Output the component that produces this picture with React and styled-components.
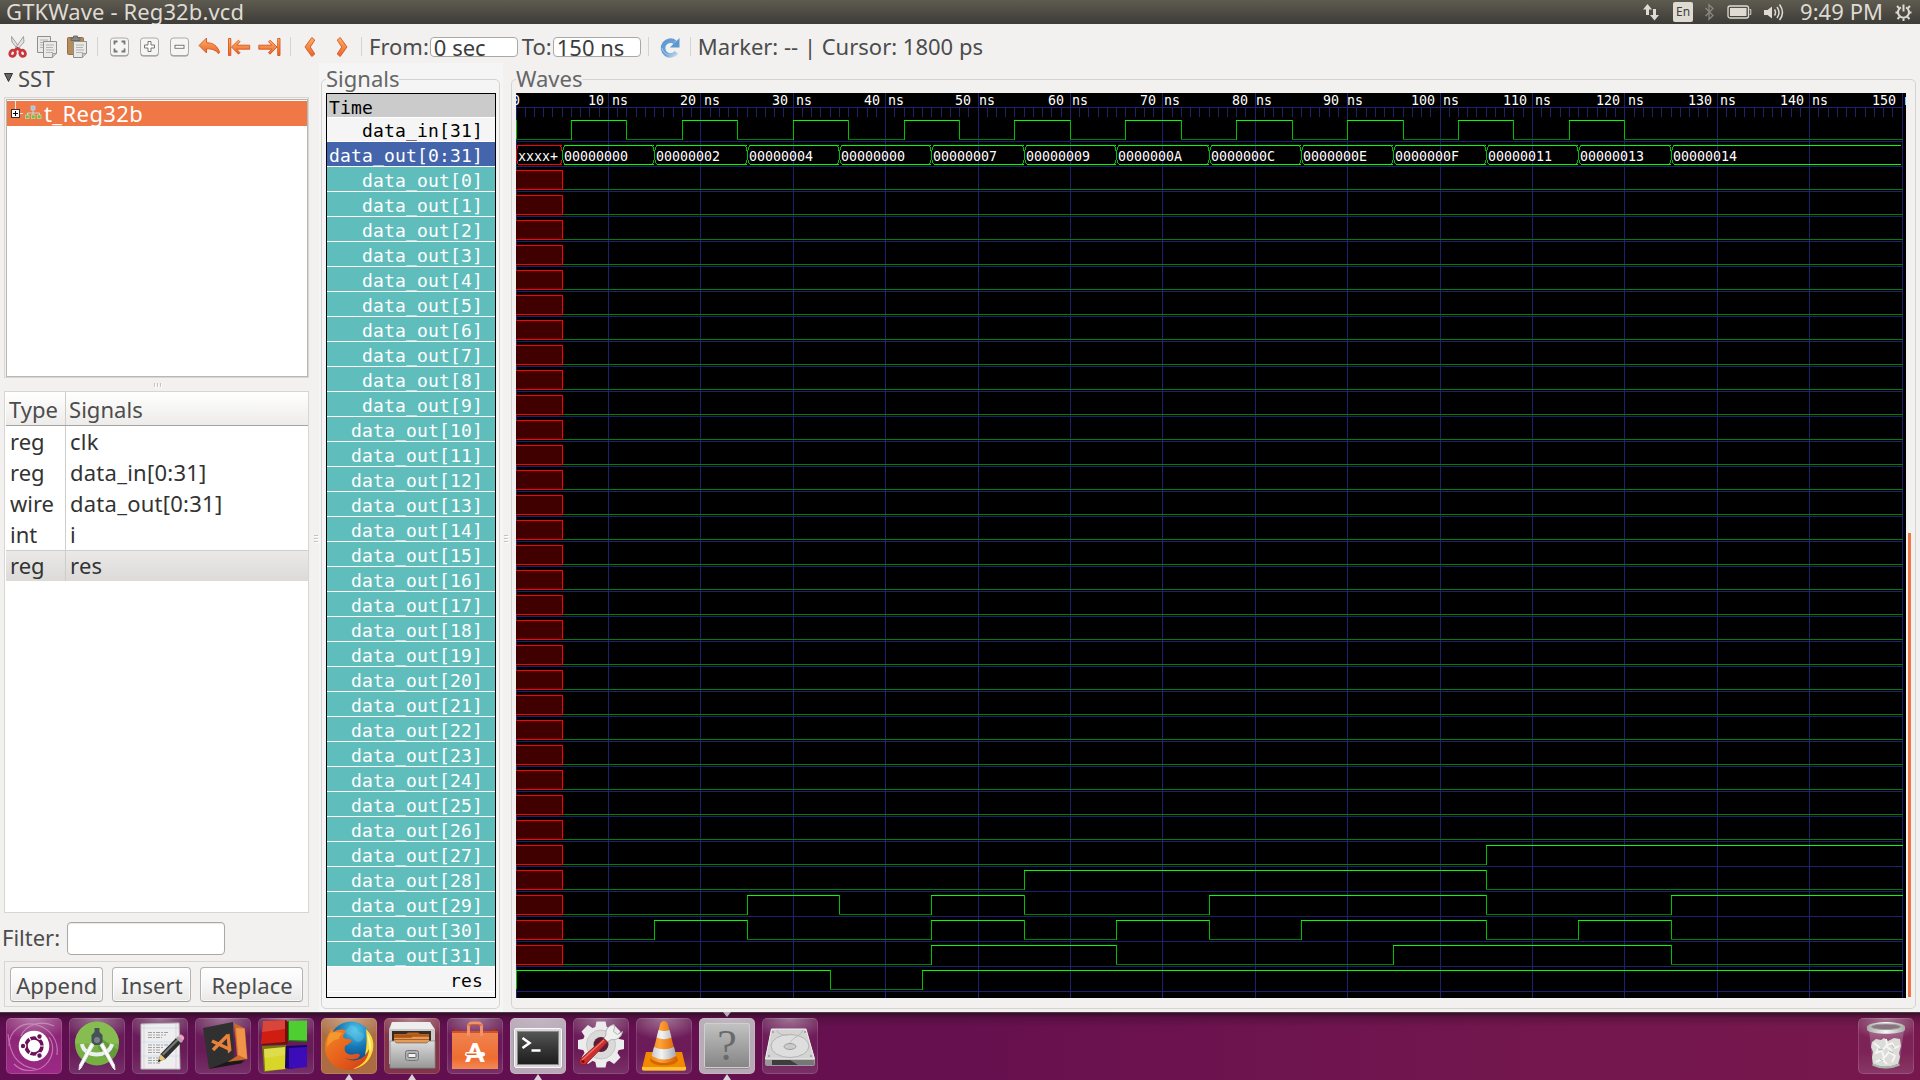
import React from "react";
import styled, { createGlobalStyle, css } from "styled-components";

const UI = '"Noto Sans", "Open Sans", sans-serif';
const MONO = '"DejaVu Sans Mono", "Liberation Mono", monospace';

const Global = createGlobalStyle`
  *, *::before, *::after { box-sizing: border-box; }
  html, body { margin: 0; padding: 0; }
  body { background: #f2f1f0; overflow: hidden; }
  svg { display: block; flex: none; }
`;

const Desktop = styled.div`
  width: 1920px;
  height: 1080px;
  display: grid;
  grid-template-rows: 24px 988px 68px;
  font-family: ${UI};
  font-size: 22px;
  line-height: 30px;
  color: #4c4c4c;
  white-space: nowrap;
`;

const Label = styled.span`
  letter-spacing: ${(p) => p.$track || 0}px;
  flex: none;
`;

/* ---------- top panel ---------- */

const TopPanel = styled.header`
  display: flex;
  justify-content: space-between;
  padding: 0 7px 0 6px;
  height: 24px;
  overflow: hidden;
  background: linear-gradient(#5d5a4f, #59564d 15%, #3d3c37);
  color: #dfdbd2;
`;

const PanelText = styled(Label)`
  line-height: 24px;
  margin-top: -1px;
`;

const Tray = styled.div`
  display: flex;
  align-items: flex-start;
`;

const TrayIcon = styled.svg`
  margin-right: ${(p) => p.$gap}px;
`;

const LangBadge = styled.span`
  width: 20px;
  height: 20px;
  margin: 2px 11px 0 0;
  border-radius: 2px;
  background: #dfdbd2;
  color: #3f3e39;
  font-size: 12px;
  line-height: 20px;
  text-align: center;
`;

/* ---------- window ---------- */

const Window = styled.main`
  display: flex;
  flex-direction: column;
  background: #f2f1f0;
  min-height: 0;
`;

const Toolbar = styled.div`
  height: 39px;
  flex: none;
  display: flex;
  align-items: flex-start;
  padding: 7px 0 0 6px;
`;

const Tool = styled.svg`
  width: 24px;
  height: 32px;
  margin-right: ${(p) => (p.$gap === undefined ? 6 : p.$gap)}px;
`;

const Separator = styled.div`
  width: 1px;
  height: 19px;
  margin: 6px ${(p) => p.$right}px 0 ${(p) => p.$left}px;
  background: #d6d4d1;
  flex: none;
`;

const TimeEntry = styled.div`
  width: 88px;
  height: 20px;
  margin: 6px ${(p) => p.$right || 0}px 0 ${(p) => p.$left || 0}px;
  padding-left: 3px;
  border: 1px solid #aaa8a4;
  border-radius: 4px;
  background: #fff;
  color: #3c3c3c;
  overflow: hidden;
  line-height: 18px;
  flex: none;
`;

const Body = styled.div`
  flex: 1;
  display: flex;
  min-height: 0;
`;

/* ---------- left column ---------- */

const SidePane = styled.aside`
  width: 310px;
  display: flex;
  flex-direction: column;
  padding: 0 1px 5px 4px;
  flex: none;
`;

const Expander = styled.div`
  display: flex;
  gap: 5px;
  height: 34px;
  svg { margin-top: 10px; }
`;

const TreeBox = styled.div`
  height: 281px;
  border: 1px solid #d8d6d3;
  padding: 1px 0 0 1px;
  background: #f2f1f0;
`;

const TreeInner = styled.div`
  height: 278px;
  border: 1px solid #b9b7b2;
  background: #fff;
  padding-top: 1px;
`;

const TreeRow = styled.div`
  display: flex;
  height: 25px;
  background: #f07746;
  color: #fff;
  svg { margin-right: 0; }
  span { margin-top: -3px; }
`;

const Grip = styled.div`
  display: flex;
  align-items: center;
  justify-content: center;
  gap: 2px;
  flex: none;
  flex-direction: ${(p) => (p.$vertical ? "column" : "row")};
  width: ${(p) => (p.$vertical ? `${p.$size}px` : "auto")};
  height: ${(p) => (p.$vertical ? "auto" : `${p.$size}px`)};
  padding: ${(p) => p.$pad || 0};
  i {
    display: block;
    width: ${(p) => (p.$vertical ? 4 : 1)}px;
    height: ${(p) => (p.$vertical ? 1 : 4)}px;
    background: #c5c3c0;
    box-shadow: 1px 1px 0 #fff;
  }
`;

const SignalTable = styled.div`
  height: 522px;
  border: 1px solid #d8d6d3;
  background: #fff;
  color: #3c3c3c;
  padding: 0 0 0 1px;
`;

const TableRow = styled.div`
  display: grid;
  grid-template-columns: 60px 1fr;
  height: ${(p) => (p.$head ? 34 : 31)}px;
  color: ${(p) => (p.$head ? "#4c4c4c" : "#333")};
  background: ${(p) =>
    p.$head ? "linear-gradient(#fff, #edecea)" : p.$selected ? "linear-gradient(#ebeae8, #dbdad8)" : "#fff"};
  border-bottom: ${(p) => (p.$head ? "1px solid #a5a39e" : "none")};
  box-shadow: ${(p) => (p.$selected ? "inset 0 1px #cfcecb" : "none")};
`;

const Cell = styled.div`
  padding: ${(p) => (p.$head ? 2 : 0)}px 0 0 ${(p) => (p.$head ? 3 : 4)}px;
  border-right: ${(p) => (p.$rule ? "1px solid #cfcdca" : "none")};
  letter-spacing: ${(p) => (p.$rule ? 0 : p.$head ? 0.05 : 0.25)}px;
`;

const FilterRow = styled.div`
  display: flex;
  height: 48px;
  padding-top: 9px;
  margin-left: -2px;
`;

const FilterInput = styled.div`
  width: 158px;
  height: 33px;
  margin-left: auto;
  margin-right: 84px;
  border: 1px solid #aaa8a4;
  border-radius: 4px;
  background: #fff;
  box-shadow: inset 0 1px 1px #e8e7e5;
`;

const ButtonBar = styled.div`
  display: flex;
  gap: 9px;
  height: 46px;
  padding: 5px;
  border: 1px solid #d8d6d3;
`;

const Button = styled.button`
  width: ${(p) => p.$w}px;
  height: 35px;
  padding: 1px 0 0 1px;
  border: 1px solid #b4b2ae;
  border-bottom-color: #a19f9a;
  border-radius: 4px;
  background: linear-gradient(#fff, #f7f6f6 50%, #e9e8e7);
  box-shadow: inset 0 0 0 1px rgba(255, 255, 255, 0.7);
  font: inherit;
  line-height: 32px;
  color: #4c4c4c;
  letter-spacing: 0.12px;
  display: flex;
  justify-content: center;
`;

/* ---------- framed panes ---------- */

const SignalsPane = styled.section`
  width: 184px;
  padding-left: 2px;
  background: #f5f5f5;
  flex: none;
`;

const Frame = styled.fieldset`
  width: ${(p) => p.$w}px;
  height: 946px;
  margin: 0;
  padding: 0 0 0 4px;
  min-width: 0;
  border: 1px solid #d5d3d0;
  border-radius: 5px;
`;

const FrameTitle = styled.legend`
  padding: 0 0 2px;
  height: 32px;
  color: #666;
`;

const FrameContent = styled.div`
  display: flex;
  gap: 2px;
  margin-top: -2px;
`;

const NameList = styled.div`
  width: 170px;
  height: 905px;
  border: 1px solid #000;
  background: #f5f5f5;
  font-family: ${MONO};
  font-size: 18px;
  letter-spacing: 0.163px;
  line-height: 21px;
`;

const tones = {
  head: css`background: #cbcbcb; color: #000; text-align: left; padding-top: 3px;`,
  plain: css`background: #f5f5f5; color: #000;`,
  active: css`background: #4464ac; color: #fff;`,
  bit: css`background: #5fbdbb; color: #fff;`,
};

const NameRow = styled.div`
  height: ${(p) => (p.$short ? 24 : 25)}px;
  padding: ${(p) => (p.$short ? 2 : 3)}px 12px 0 2px;
  border-bottom: 1px solid #fff;
  text-align: right;
  ${(p) => tones[p.$tone]}
`;

const ScrollTrack = styled.div`
  width: 3px;
  height: 904px;
  display: flex;
  flex-direction: column;
  justify-content: flex-end;
`;

const ScrollThumb = styled.div`
  height: 464px;
  background: #f07746;
`;

/* ---------- waveform ---------- */

const WaveText = styled.text`
  font-family: ${MONO};
  font-size: 13.3px;
  fill: #fff;
`;

const END = 150;
const px = (t) => Math.floor(t * 9.24);

const bus = [
  [5, "00000000"], [15, "00000002"], [25, "00000004"], [35, "00000000"],
  [45, "00000007"], [55, "00000009"], [65, "0000000A"], [75, "0000000C"],
  [85, "0000000E"], [95, "0000000F"], [105, "00000011"], [115, "00000013"],
  [125, "00000014"],
];

const toggles = {
  27: [105],
  28: [55, 105],
  29: [25, 35, 45, 55, 75, 105, 125],
  30: [15, 25, 45, 55, 65, 75, 85, 105, 115, 125],
  31: [45, 65, 95, 125],
};

const clockEdges = Array.from({ length: 20 }, (_, i) => 6 + i * 6);

function Trace({ row, start, initial, edges, rise }) {
  const hi = 27 + row * 25;
  const lo = hi + 19;
  const stops = [...edges, END];
  const parts = [];
  let from = start;
  let level = initial;
  if (rise) parts.push(<rect key="r" x={0} y={hi} width={1} height={19} fill="#00c000" />);
  stops.forEach((t, i) => {
    parts.push(
      <rect key={`h${i}`} x={px(from)} y={level ? hi : lo} width={px(t) - px(from) + 1} height={1}
        fill={level ? "#00ff00" : "#008000"} />
    );
    if (i < edges.length)
      parts.push(<rect key={`v${i}`} x={px(t)} y={hi} width={1} height={20} fill="#00c000" />);
    from = t;
    level = !level;
  });
  return <g>{parts}</g>;
}

function Unknown({ row }) {
  const y = 27 + row * 25;
  return (
    <g>
      <rect x={0} y={y} width={46} height={20} fill="#400000" />
      <rect x={0} y={y} width={47} height={1} fill="#f00" />
      <rect x={0} y={y + 19} width={47} height={1} fill="#f00" />
      <rect x={46} y={y} width={1} height={20} fill="#f00" />
    </g>
  );
}

function BusTrace() {
  const top = 52.5;
  const bot = 71.5;
  const mid = 62;
  const segs = [[0, "xxxx+"], ...bus];
  return (
    <g fill="none" strokeWidth="1" shapeRendering="crispEdges">
      {segs.map(([t, value], i) => {
        const last = i === segs.length - 1;
        const a = px(t) + 0.5;
        const b = last ? px(END) - 1 : px(segs[i + 1][0]) + 0.5;
        const main = i === 0 ? "#f00" : "#00ff00";
        const edge = i === 0 ? "#f00" : "#00c000";
        const l = i === 0 ? a + 1 : a + 2;
        return (
          <g key={t}>
            <path d={`M${l - (i === 1 ? 1 : 0)} ${top}H${last ? b : b - 1}M${l - (i === 1 ? 1 : 0)} ${bot}H${last ? b : b - 1}`} stroke={main} />
            <path d={`M${l} ${top}L${a} ${mid - 3}V${mid + 3}L${l} ${bot}`} stroke={edge} />
            {!last && <path d={`M${b - 2} ${top}L${b} ${mid - 3}V${mid + 3}L${b - 2} ${bot}`} stroke={edge} />}
            <WaveText x={px(t) + 2} y={68}>{value}</WaveText>
          </g>
        );
      })}
    </g>
  );
}

function Waveform() {
  const decades = Array.from({ length: 16 }, (_, i) => i * 10);
  const minor = Array.from({ length: 151 }, (_, i) => i);
  return (
    <svg width="1390" height="905" viewBox="0 0 1390 905">
      <rect width="1390" height="905" fill="#000" />
      <g fill="#202070">
        <rect x={0} y={14} width={1387} height={1} />
        {minor.map((t) => <rect key={t} x={px(t)} y={14} width={1} height={10} />)}
        {decades.map((t) => <rect key={t} x={px(t)} y={0} width={1} height={905} />)}
        {Array.from({ length: 35 }, (_, k) => <rect key={k} x={0} y={48 + k * 25} width={1387} height={1} />)}
      </g>
      {decades.map((t) => {
        const text = t === 0 ? "0" : `${t} ns`;
        return <WaveText key={t} x={Math.floor(t * 9.2) - text.length * 4} y={12}>{text}</WaveText>;
      })}
      <Trace row={0} start={0} initial={false} edges={clockEdges} rise />
      <BusTrace />
      {Array.from({ length: 32 }, (_, n) => (
        <g key={n}>
          <Unknown row={n + 2} />
          <Trace row={n + 2} start={5.1} initial={false} edges={toggles[n] || []} />
        </g>
      ))}
      <Trace row={34} start={0} initial edges={[34, 44]} rise />
    </svg>
  );
}

/* ---------- shared gradients ---------- */

const Defs = () => (
  <svg width="0" height="0">
    <defs>
      <linearGradient id="orange" x1="0" y1="0" x2="0" y2="1">
        <stop offset="0" stopColor="#fbb268" /><stop offset="1" stopColor="#ea6328" />
      </linearGradient>
      <linearGradient id="grey" x1="0" y1="0" x2="0" y2="1">
        <stop offset="0" stopColor="#dcdcdc" /><stop offset="1" stopColor="#989898" />
      </linearGradient>
      <linearGradient id="darkScreen" x1="0" y1="0" x2="0" y2="1">
        <stop offset="0" stopColor="#565656" /><stop offset="0.45" stopColor="#3a3a3a" /><stop offset="1" stopColor="#1d1d1d" />
      </linearGradient>
      <linearGradient id="plate" x1="0" y1="0" x2="0" y2="1">
        <stop offset="0" stopColor="#c2c2c2" /><stop offset="1" stopColor="#858585" />
      </linearGradient>
      <linearGradient id="bag" x1="0" y1="0" x2="0" y2="1">
        <stop offset="0" stopColor="#f08350" /><stop offset="0.7" stopColor="#ee6d30" /><stop offset="1" stopColor="#f38a55" />
      </linearGradient>
      <linearGradient id="cone" x1="0" y1="0" x2="1" y2="0">
        <stop offset="0" stopColor="#f08a12" /><stop offset="0.35" stopColor="#ffa23a" /><stop offset="1" stopColor="#d95f00" />
      </linearGradient>
      <linearGradient id="coneWhite" x1="0" y1="0" x2="1" y2="0">
        <stop offset="0" stopColor="#c5c8ca" /><stop offset="0.4" stopColor="#f2f3f4" /><stop offset="1" stopColor="#a5a9ac" />
      </linearGradient>
      <linearGradient id="rim" x1="0" y1="0" x2="1" y2="0">
        <stop offset="0" stopColor="#a9aba7" /><stop offset="0.5" stopColor="#f7f7f5" /><stop offset="1" stopColor="#a9aba7" />
      </linearGradient>
      <radialGradient id="globe" cx="0.6" cy="0.2" r="0.8">
        <stop offset="0" stopColor="#52c6ea" /><stop offset="0.5" stopColor="#1577b4" /><stop offset="1" stopColor="#123d7c" />
      </radialGradient>
      <linearGradient id="fox" x1="0" y1="0" x2="1" y2="1">
        <stop offset="0" stopColor="#f08a24" /><stop offset="0.5" stopColor="#e8601c" /><stop offset="1" stopColor="#c93c18" />
      </linearGradient>
      <linearGradient id="reload" x1="0" y1="0" x2="1" y2="1">
        <stop offset="0" stopColor="#5d97cf" /><stop offset="0.6" stopColor="#6fa5da" /><stop offset="1" stopColor="#c5d9ec" />
      </linearGradient>
    </defs>
  </svg>
);

const DefsHolder = styled.div`
  width: 0;
  height: 0;
  overflow: hidden;
`;

/* ---------- toolbar icons ---------- */

const CutIcon = () => (
  <Tool viewBox="0 0 24 32">
    <path d="M5.500 5.500 6 11l6 7.500 1.500-2z" fill="#e4e4e2" stroke="#8b8b88" strokeWidth=".8" />
    <path d="M17.500 5.500 18 11l-7 8-1.500-2z" fill="#e4e4e2" stroke="#8b8b88" strokeWidth=".8" />
    <g fill="none" stroke="#c8373b" strokeWidth="2.800">
      <ellipse cx="6.600" cy="22.300" rx="2.700" ry="3.200" transform="rotate(28 6.600 22.300)" />
      <ellipse cx="16.600" cy="22.300" rx="2.700" ry="3.200" transform="rotate(-28 16.600 22.300)" />
      <path d="M8.500 19.500 11.500 17.500 14.800 19.500" />
    </g>
  </Tool>
);

const Sheet = ({ x, y }) => (
  <g transform={`translate(${x} ${y})`}>
    <path d="M.5.5h13v12l-4 4h-9z" fill="#e9e9e7" stroke="#8f8f8c" />
    <path d="M3 4h8M3 6.500h7M3 9h8M3 11.500h7" stroke="#b3b3b0" />
    <path d="M13.500 12.500h-4v4" fill="#c9c9c6" stroke="#8f8f8c" strokeWidth=".8" />
  </g>
);

const CopyIcon = () => (
  <Tool viewBox="0 0 24 32"><Sheet x={1} y={5} /><Sheet x={7} y={10} /></Tool>
);

const PasteIcon = () => (
  <Tool viewBox="0 0 24 32" $gap={7}>
    <rect x="1.500" y="6.500" width="16" height="17" rx="1" fill="#b58c5c" stroke="#957045" />
    <path d="M5 9.500V7h2.500V5h4v2H14v2.500z" fill="#858583" stroke="#60605e" strokeWidth=".8" />
    <Sheet x={7} y={10} />
  </Tool>
);

const ZoomBox = ({ children }) => (
  <Tool viewBox="0 0 24 32">
    <rect x="2.500" y="7.500" width="18" height="18" rx="3" fill="#8d8d8b" />
    <rect x="2.500" y="7" width="18" height="17.500" rx="3" fill="#f5f5f4" stroke="#a3a3a1" strokeWidth=".9" />
    {children}
  </Tool>
);

const BackArrow = () => (
  <Tool viewBox="0 0 24 32">
    <path d="M1 14.500 8.500 7v4.700c7 0 11 3.500 13 9.300l-1 1.800c-2.500-3.500-6-5-12-5v4.200z" fill="url(#orange)" stroke="#d9531e" strokeWidth=".9" strokeLinejoin="round" />
  </Tool>
);

const EdgeArrow = ({ flip, gap }) => (
  <Tool viewBox="0 0 24 32" $gap={gap}>
    <g transform={flip ? "translate(23 0) scale(-1 1)" : "translate(-.5 0)"} fill="url(#orange)" stroke="#d9531e" strokeWidth=".9" strokeLinejoin="round">
      <path d="M1 7.500h2.300v17H1z" />
      <path d="M4 16 11 9.200l1.500 1.500-3.300 3.500h13v4H9.200l3.300 3.500-1.500 1.500z" />
    </g>
  </Tool>
);

const Chevron = ({ flip, gap }) => (
  <Tool viewBox="0 0 24 32" $gap={gap}>
    <path transform={flip ? "translate(24 0) scale(-1 1)" : undefined} d="M13.800 6.500 16.800 9l-4.500 7 4.500 7-3 2.500L7 16z" fill="url(#orange)" stroke="#d9531e" strokeWidth=".9" strokeLinejoin="round" />
  </Tool>
);

const ReloadIcon = () => (
  <Tool viewBox="0 0 24 32" $gap={8}>
    <path d="M18.500 21.300A7.400 7.400 0 1 1 17 11.200" fill="none" stroke="url(#reload)" strokeWidth="4.600" />
    <path d="M21.500 7v9.500h-9.700z" fill="#5d97cf" />
    <path d="M17.500 22.500A8.800 8.800 0 0 1 4 17" fill="none" stroke="#a8c6e4" strokeWidth="1" />
  </Tool>
);

/* ---------- launcher ---------- */

const Launcher = styled.nav`
  display: flex;
  gap: 7px;
  padding: 6px 6px 0;
  background:
    linear-gradient(rgba(40, 10, 30, 0.75), rgba(40, 10, 30, 0.25) 5px, rgba(0, 0, 0, 0) 14px),
    linear-gradient(90deg, #5f0f50, #67104f 50%, #74174e 82%, #76184e);
  border-top: 1px solid #4c4048;
`;

const Tile = styled.div`
  position: relative;
  width: 56px;
  height: 56px;
  margin-top: -1px;
  margin-left: ${(p) => (p.$end ? "auto" : 0)};
  border-radius: 5px;
  flex: none;
  background:
    radial-gradient(ellipse 40px 22px at 50% 0, rgba(255, 255, 255, ${(p) => (p.$bright ? 0.15 : 0.4)}), rgba(255, 255, 255, 0)),
    ${(p) => p.$bg || "linear-gradient(rgba(255,255,255,0.06), rgba(255,255,255,0.05) 60%, rgba(255,255,255,0.14))"};
  box-shadow: inset 0 0 0 1px rgba(255, 255, 255, 0.14);
  svg { border-radius: 5px; }
`;

const Pip = styled.i`
  position: absolute;
  left: 24px;
  ${(p) => (p.$top ? "top: -6px;" : "bottom: -6px;")}
  border-left: 4px solid transparent;
  border-right: 4px solid transparent;
  ${(p) => (p.$top ? "border-top: 5px solid #b5aeb3;" : "border-bottom: 6px solid #d9d4d8;")}
`;

const Art = ({ children }) => <svg width="56" height="56" viewBox="0 0 56 56">{children}</svg>;

const DashArt = () => (
  <Art>
    <g fill="none" stroke="#e3a5d5" strokeWidth="1.200" opacity=".6">
      <path d="M3 28C3 12 17 3 31 7c14 4 22 16 20 30" /><path d="M48 8C36 2 20 6 15 18" />
      <path d="M8 46c8 9 26 9 34-2 6-8 6-18 1-25" /><path d="M2 16c2 20 8 32 28 35" />
    </g>
    <circle cx="28" cy="28" r="15.300" fill="#fff" />
    <circle cx="28" cy="28" r="8" fill="none" stroke="#6b1259" strokeWidth="3.600" />
    {[180, 60, -60].map((a) => (
      <g key={a} transform={`rotate(${a} 28 28)`}>
        <circle cx="39" cy="28" r="3.300" fill="#fff" /><circle cx="39" cy="28" r="2.200" fill="#6b1259" />
      </g>
    ))}
    {[0, 120, 240].map((a) => <path key={a} transform={`rotate(${a} 28 28)`} d="M34 28h6" stroke="#fff" strokeWidth="1.200" />)}
  </Art>
);

const StudioArt = () => (
  <Art>
    <circle cx="28" cy="25.500" r="22" fill="#76b043" />
    <path d="M6 25.500a22 22 0 0 1 44 0z" fill="#87bd50" />
    <path d="m32 20 17 12c-2 6-5 9-9 12L29 30z" fill="#5c9236" opacity=".7" />
    <path d="M13 26c2 14 27 14 30 0" fill="none" stroke="#eceff0" strokeWidth="4" />
    <path d="M25 27 12 50l-2 2 .500-5L22 25z" fill="#fff" stroke="#e1e4e5" />
    <path d="M31 27l13 23 2 2-.500-5L34 25z" fill="#fff" stroke="#e1e4e5" />
    <path d="M25.500 10h5v4l3 3v7l-3 3h-5l-3-3v-7l3-3z" fill="#455057" />
    <circle cx="28" cy="22" r="3" fill="#76828a" />
  </Art>
);

const EditorArt = () => (
  <Art>
    <path d="M9 6 47 5l1 46H9z" fill="#eeeeee" stroke="#bdbdbd" />
    <path d="M12 6v45M44 6v45" stroke="#d8c0d8" strokeWidth=".7" />
    <path d="M10 10h37M10 24h37M10 38h37" stroke="#c4dcf2" strokeWidth=".8" />
    <g stroke="#999" strokeWidth=".9">
      <path d="M16 14.500h20M16 17h18M16 19.500h14M16 27h20M16 29.500h16M16 32h13M16 34.500h12M16 40h12M16 42.500h10M16 45h12" strokeDasharray="4 1 2 1" />
    </g>
    <path d="m26 44 2.500-8L44 20l5 5-15.500 16z" fill="#2f2f2f" />
    <path d="m30 36 15-15 1.500 1.500-15 15z" fill="#777" />
    <path d="m26 44 2.500-8 5 5z" fill="#e7c578" /><path d="m26 44 1-3 2 2z" fill="#222" />
    <path d="m44 20 2-2 5 5-2 2z" fill="#aaa" /><path d="m46 18 2-1.500c2-.500 5 2.500 4 4.500l-1.500 2z" fill="#eea0c0" />
  </Art>
);

const CodeArt = () => (
  <Art>
    <path d="m8 10 30-6 1 38-25 9z" fill="#303030" />
    <path d="m14 51 20-8 16-.5-4 3z" fill="#191919" />
    <path d="m39 5 11 5.500 2.500 30.500-20 3 9.500-6z" fill="#c96a26" />
    <path d="m41 10 8.500.5L52 41l-9-4z" fill="#ef9449" />
    <path d="m17 23 17 8M18 32 33 17" stroke="#e8813a" strokeWidth="3.400" fill="none" />
    <path d="m31.500 17 3-1.500 2 17-3.500 3z" fill="#e8813a" />
  </Art>
);

const BlocksArt = () => (
  <Art>
    <path d="m5 3 23-1 2 2v22L4 27z" fill="#6a120c" /><path d="m5 3 22-1v22L3 26z" fill="#d01d11" />
    <path d="m30 3 19 1v20l-19-1z" fill="#1c7a14" /><path d="m31 3 18-.500v20L31 22z" fill="#4fce31" />
    <path d="m4 28 24-1v24L6 54z" fill="#77770d" /><path d="m6 31 21-2v22L7 53z" fill="#d8d62b" />
    <path d="m28 28 21-1v20l-17 4-5-1z" fill="#18006b" /><path d="m31 30 18-1v20l-18 2z" fill="#3c0cb8" />
    <path d="m5 3 22-1v9L4 14z" fill="#fff" opacity=".18" /><path d="m6 31 21-2v8L6 40z" fill="#fff" opacity=".16" />
  </Art>
);

const FirefoxArt = () => (
  <Art>
    <circle cx="30" cy="25" r="21.500" fill="url(#globe)" />
    <path d="M30 7c7 1 4 6 9 7s5 6 1 9-6-1-9-4-8-3-6-7z" fill="#6fd0ec" opacity=".35" />
    <path d="M45 11c6 6 8 14 6 23-3 12-12 18-23 18C14 52 4 42 4 29 4 23 6 18 9 14l1-4 3 4c4-3 9-3 12-1l-3 5c0 2 2 3 5 3l4 1c-1 3-4 4-7 6-2 7 4 10 10 8 4-1 7 1 3 4-6 3-10 1-13 0 9 6 21 0 24-8 2-8 0-14-3-21z" fill="url(#fox)" />
    <path d="M45 11c7 6 9 16 6 24-3 9-10 15-19 16 10-4 16-11 16-20-1 3-3 5-4 6 2-9 2-18 1-26z" fill="#ffd93a" />
    <path d="M46 15c4 6 5 13 3 20-1-8-2-14-3-20z" fill="#fff29a" />
    <path d="M9 15c3-1 9-1 13 0-2 1-4 4-4 6-5 0-9 4-12 8 0-6 1-10 3-14z" fill="#f5a333" opacity=".75" />
  </Art>
);

const FilesArt = () => (
  <Art>
    <path d="M8 4h38l5 7v35H5V11z" fill="#c9c9c9" /><path d="M8 4h38l4 7H6z" fill="#eee" />
    <rect x="8" y="13" width="39" height="12" fill="#3a2a24" />
    <path d="M10 16h12l2-1.500h10l2 1.500h9v9H10z" fill="#b8611f" /><path d="M10 20h17l2-1.500h16v6H10z" fill="#e79a55" />
    <path d="M10 18h35M10 21.500h35" stroke="#8d4718" strokeWidth=".7" />
    <path d="M6 23h5l1 2h31l2-2h6v27H6z" fill="url(#grey)" stroke="#858585" strokeWidth=".8" />
    <path d="M6 50h45v1H6z" fill="#666" />
    <rect x="21.500" y="32.500" width="13" height="10" rx="2" fill="#b0b0b0" stroke="#777" /><rect x="24" y="35.500" width="8" height="4" rx="1" fill="#f4f4f4" stroke="#666" />
  </Art>
);

const StoreLetter = styled.text`
  font-family: Lato, "Open Sans", sans-serif;
  font-weight: 900;
  font-size: 27px;
  fill: #fff;
`;

const StoreArt = () => (
  <Art>
    <path d="m8 9 3 4h34l3-4v8H8z" fill="#a53b16" /><path d="m5 15 2-4v4zM51 15l-2-4v4z" fill="#8d2d0e" />
    <rect x="5" y="15" width="46" height="36" fill="url(#bag)" />
    <path d="M5 13h46v2H5z" fill="#cf5320" />
    <path d="M21.500 18V9q0-4 4-4h5q4 0 4 4v9" fill="none" stroke="#f3926a" strokeWidth="3" />
    <path d="M21.500 7h13" stroke="#c64f22" strokeWidth="1" />
    <StoreLetter x="28" y="43.500" textAnchor="middle">A</StoreLetter>
    <rect x="18" y="34" width="20" height="4.500" rx="2.200" fill="#fff" /><path d="M19.500 36.300h10" stroke="#e9601f" strokeWidth="1.600" />
  </Art>
);

const TerminalArt = () => (
  <Art>
    <rect x="3.500" y="11" width="49" height="39" rx="2" fill="#777" opacity=".5" />
    <rect x="4.500" y="10.500" width="47" height="39" rx="1.500" fill="#d8d8d8" stroke="#f8f8f8" />
    <rect x="7.500" y="13.500" width="41" height="33" fill="url(#darkScreen)" stroke="#888" />
    <path d="m12.500 20 7 5-7 5" fill="none" stroke="#fff" strokeWidth="2.600" />
    <path d="M21.500 32.500h9" stroke="#fff" strokeWidth="2.300" />
  </Art>
);

const SettingsArt = () => (
  <Art>
    <g transform="translate(28 26.500)" fill="#ececec">
      {Array.from({ length: 8 }, (_, i) => <path key={i} transform={`rotate(${i * 45})`} d="M-6-16l1.500-7h9L6-16z" />)}
      <circle r="18.500" /><circle r="14.500" fill="#dadada" stroke="#c6c6c6" /><circle r="7.500" fill="#5b2038" />
    </g>
    <path d="M41 6.500c-5 1-9 5-8 10l-2 4 3.500 3.500 4-2.500c5 1 10-2 11-8l-5 3-4-3 1-4z" fill="#f1f1ef" stroke="#aaa" strokeWidth=".9" />
    <path d="m30.500 20.500 4 3.500L13 46c-2 2-7 .500-6.500-4z" fill="#cf2f2c" stroke="#8b1817" strokeWidth=".8" />
    <path d="M31 22 9 42" stroke="#ec7470" strokeWidth="1.300" /><circle cx="10" cy="43.500" r="1.500" fill="#701010" />
  </Art>
);

const VlcArt = () => (
  <Art>
    <path d="m10 34-4 16.500q0 2 2 2h40q2 0 2-2L46 34z" fill="#f28a00" /><path d="M6 49h44v2q0 1.500-2 1.500H8Q6 52.500 6 51z" fill="#ffc13a" />
    <ellipse cx="28" cy="42" rx="14" ry="5.500" fill="#c65a00" opacity=".7" />
    <path d="M24.500 5q3.500-4 7 0l9.500 36q-13 8-26 0z" fill="url(#cone)" />
    <path d="m22.500 12-2 7.500q7.500 3.500 15 0l-2-7.500q-5.500 2-11 0zM18 29l-2.300 9q12.300 7 24.600 0L38 29q-10 4.500-20 0z" fill="url(#coneWhite)" />
  </Art>
);

const UnknownMark = styled.text`
  font-family: "Liberation Serif", serif;
  font-size: 44px;
  fill: #6a6a6a;
`;

const UnknownArt = () => (
  <Art>
    <rect x="5.500" y="6" width="45" height="45" rx="2" fill="#777" opacity=".6" />
    <rect x="5.500" y="5.500" width="45" height="44" rx="1.500" fill="url(#plate)" stroke="#cfcfcf" />
    <UnknownMark x="28" y="42" textAnchor="middle">?</UnknownMark>
  </Art>
);

const DiskArt = () => (
  <Art>
    <path d="M9 11h35l9 30v5q0 2-2 2H5q-2 0-2-2v-5z" fill="#999" />
    <path d="M9.500 11h34.500l8.500 30H3.500z" fill="#d4d4d4" stroke="#efefef" />
    <ellipse cx="28" cy="28" rx="19" ry="11.500" fill="#dedede" stroke="#b3b3b3" />
    <path d="M15 12c1 5 9 6 15 4M41 12c-2 6-10 7-14 14" fill="none" stroke="#b9b9b9" />
    <ellipse cx="28" cy="28.500" rx="6" ry="3" fill="#cacaca" stroke="#9d9d9d" />
    <path d="M10 42h42v3q0 2-2 2H10z" fill="#3d3d3d" /><path d="M28 42h24v4q0 1-2 1H36z" fill="#777" />
    <circle cx="11" cy="14" r="1" fill="#999" /><circle cx="43" cy="14" r="1" fill="#999" /><circle cx="7" cy="38" r="1" fill="#999" /><circle cx="49" cy="38" r="1" fill="#999" />
  </Art>
);

const TrashArt = () => (
  <Art>
    <path d="m11 12 4 36q13 5 26 0l5-36z" fill="#fff" opacity=".2" />
    <path d="m14 24 4-3 5 1 3-2 4 3 6-3 6 1 1 7-2 7 1 4-2 7q-12 5-25 1l-1-8 1-5-2-5z" fill="#dcdcd8" />
    <path d="m16 25 5 4-3 6 6-2 2 7 5-6 6 4-3 6M28 21l1 6 5-2 3 5 4-2M18 44l6-3 5 5M24 33l4-5 6 5" fill="none" stroke="#f6f6f4" strokeWidth="1.800" />
    <path d="m20 31 5 1M31 33l4 2M22 41l3 2M34 27l2 3" stroke="#b5b5b0" strokeWidth="1" />
    <path d="M14.500 46.500q13 6 27 0" fill="none" stroke="#a9b5aa" strokeWidth="2" />
    <path d="M9 8.500C12 2.500 44 2.500 47 8.500v3.500c-4 5-34 5-38 0z" fill="url(#rim)" />
    <ellipse cx="28" cy="8.800" rx="14.500" ry="2.800" fill="#8b7280" stroke="#9c9e99" />
  </Art>
);

/* ---------- data ---------- */

const tableRows = [
  ["reg", "clk"],
  ["reg", "data_in[0:31]"],
  ["wire", "data_out[0:31]"],
  ["int", "i"],
  ["reg", "res", true],
];

const apps = [
  { art: DashArt, bg: "linear-gradient(#86256f, #9c2a86)" },
  { art: StudioArt },
  { art: EditorArt },
  { art: CodeArt },
  { art: BlocksArt },
  { art: FirefoxArt, bg: "#aa6c40", running: true },
  { art: FilesArt, bg: "#84344a", running: true },
  { art: StoreArt },
  { art: TerminalArt, bg: "#b9a9b8", running: true, bright: true },
  { art: SettingsArt },
  { art: VlcArt },
  { art: UnknownArt, bg: "#b7aab5", running: true, focused: true, bright: true },
  { art: DiskArt },
];

export default function App() {
  return (
    <Desktop>
      <Global />
      <TopPanel>
        <PanelText $track={0.11}>GTKWave - Reg32b.vcd</PanelText>
        <Tray>
          <TrayIcon $gap={13} width="18" height="24" viewBox="0 0 18 24" fill="#dfdbd2">
            <path d="M5.500 4 10 9.500H7V15H4V9.500H1zM12.500 20.500 8 15h3V9h3v6h3z" />
          </TrayIcon>
          <LangBadge>En</LangBadge>
          <TrayIcon $gap={12} width="11" height="24" viewBox="0 0 11 24" fill="none" stroke="#8b887f" strokeWidth="1.300">
            <path d="m1.500 8 7.500 7.500-4 3.700V4.800l4 3.700L1.500 16" />
          </TrayIcon>
          <TrayIcon $gap={11} width="25" height="24" viewBox="0 0 25 24">
            <rect x="1" y="6" width="20.500" height="12" rx="2" fill="none" stroke="#dfdbd2" strokeWidth="1.300" />
            <rect x="3" y="8" width="16.500" height="8" fill="#dfdbd2" /><path d="M22.500 9.500h1.300v5h-1.300" fill="none" stroke="#dfdbd2" />
          </TrayIcon>
          <TrayIcon $gap={16} width="21" height="24" viewBox="0 0 21 24">
            <path d="M1 10h3.500L9 6.500v12L4.500 15H1z" fill="#dfdbd2" />
            <path d="M11.500 9.500q2 3 0 6M14 7q4 5.500 0 11M16.500 4.500q6 8 0 15.500" fill="none" stroke="#dfdbd2" strokeWidth="1.500" />
          </TrayIcon>
          <PanelText $track={0.05}>9:49 PM</PanelText>
          <TrayIcon $gap={1} width="29" height="24" viewBox="-13 0 29 24" fill="none" stroke="#dfdbd2">
            <path d="M5 7.300a5.500 5.500 0 1 0 5 0" strokeWidth="2" /><path d="M7.500 4.500v7" strokeWidth="2" />
            <path d="m1 6 2 2M14 6l-2 2M-.5 12.500H2M13 12.500h2.500M1.500 19l2-2M13.500 19l-2-2M7.500 18.500V21" strokeWidth="2" />
          </TrayIcon>
        </Tray>
      </TopPanel>

      <Window>
        <DefsHolder><Defs /></DefsHolder>
        <Toolbar>
          <CutIcon />
          <CopyIcon />
          <PasteIcon />
          <Separator $left={0} $right={10} />
          <ZoomBox>
            <g fill="none" stroke="#777" strokeWidth="1.800">
              <path d="M9.500 10.500H6.500v3M13.500 10.500h3v3M9.500 20.500H6.500v-3M13.500 20.500h3v-3" />
            </g>
          </ZoomBox>
          <ZoomBox><path d="M10 10.500h3v3.500h3.500v3h-3.500v3.500h-3v-3.500H6.500v-3h3.500z" fill="#fff" stroke="#777" /></ZoomBox>
          <ZoomBox><rect x="7" y="14.300" width="9" height="3" fill="#fff" stroke="#777" /></ZoomBox>
          <BackArrow />
          <EdgeArrow />
          <EdgeArrow flip gap={8} />
          <Separator $left={0} $right={7} />
          <Chevron gap={8} />
          <Chevron flip gap={7} />
          <Separator $left={0} $right={7} />
          <Label>From:</Label>
          <TimeEntry $left={1} $right={4}>0 sec</TimeEntry>
          <Label>To:</Label>
          <TimeEntry $left={1} $right={7}>150 ns</TimeEntry>
          <Separator $left={0} $right={9} />
          <ReloadIcon />
          <Separator $left={0} $right={7} />
          <Label>Marker: -- | Cursor: 1800 ps</Label>
        </Toolbar>

        <Body>
          <SidePane>
            <Expander>
              <svg width="9" height="9" viewBox="0 0 9 9"><path d="M.5.5h8L4.500 8.500z" fill="#666" stroke="#333" /></svg>
              <Label>SST</Label>
            </Expander>
            <TreeBox>
              <TreeInner>
                <TreeRow>
                  <svg width="37" height="25" viewBox="0 0 37 25">
                    <path d="M8.500 0v8M13 12.500h3" stroke="#fff" opacity=".8" />
                    <rect x="4.500" y="8.500" width="8" height="8" fill="#fff" stroke="#333" />
                    <path d="M6 12.500h5M8.500 10v5" stroke="#000" />
                    <path d="M26 9v3M20.500 14v-2h12v2M26 12v2" fill="none" stroke="#cfd8d2" />
                    <rect x="24" y="5" width="4" height="4" fill="#9cc3ee" stroke="#c8def5" strokeWidth=".6" />
                    <g fill="#6cc04f" stroke="#b4e39c" strokeWidth=".8">
                      <rect x="18.500" y="14" width="3.500" height="3.500" /><rect x="24.500" y="14" width="3.500" height="3.500" /><rect x="30.500" y="14" width="3.500" height="3.500" />
                    </g>
                  </svg>
                  <Label $track={0.4}>t_Reg32b</Label>
                </TreeRow>
              </TreeInner>
            </TreeBox>
            <Grip $size={13} $pad="0 0 0 2px"><i /><i /><i /></Grip>
            <SignalTable>
              <TableRow $head>
                <Cell $head $rule>Type</Cell>
                <Cell $head>Signals</Cell>
              </TableRow>
              {tableRows.map(([type, name, selected], i) => (
                <TableRow key={i} $selected={selected}>
                  <Cell $rule>{type}</Cell>
                  <Cell>{name}</Cell>
                </TableRow>
              ))}
            </SignalTable>
            <FilterRow>
              <Label>Filter:</Label>
              <FilterInput />
            </FilterRow>
            <ButtonBar>
              <Button $w={93}>Append</Button>
              <Button $w={80}>Insert</Button>
              <Button $w={103}>Replace</Button>
            </ButtonBar>
          </SidePane>
          <Grip $vertical $size={9} $pad="2px 0 0 3px"><i /><i /><i /></Grip>
          <SignalsPane>
            <Frame $w={179}>
              <FrameTitle>Signals</FrameTitle>
              <FrameContent>
                <NameList>
                  <NameRow $tone="head" $short>Time</NameRow>
                  <NameRow $tone="plain" $short>data_in[31]</NameRow>
                  <NameRow $tone="active">data_out[0:31]</NameRow>
                  {Array.from({ length: 32 }, (_, n) => (
                    <NameRow key={n} $tone="bit">{`data_out[${n}]`}</NameRow>
                  ))}
                  <NameRow $tone="plain">res</NameRow>
                </NameList>
              </FrameContent>
            </Frame>
          </SignalsPane>
          <Grip $vertical $size={8} $pad="2px 2px 0 0"><i /><i /><i /></Grip>
          <Frame $w={1405}>
            <FrameTitle>Waves</FrameTitle>
            <FrameContent>
              <Waveform />
              <ScrollTrack><ScrollThumb /></ScrollTrack>
            </FrameContent>
          </Frame>
        </Body>
      </Window>

      <Launcher>
        {apps.map(({ art: ArtFor, bg, running, focused, bright }, i) => (
          <Tile key={i} $bg={bg} $bright={bright}>
            <ArtFor />
            {running && <Pip />}
            {focused && <Pip $top />}
          </Tile>
        ))}
        <Tile $end><TrashArt /></Tile>
      </Launcher>
    </Desktop>
  );
}
